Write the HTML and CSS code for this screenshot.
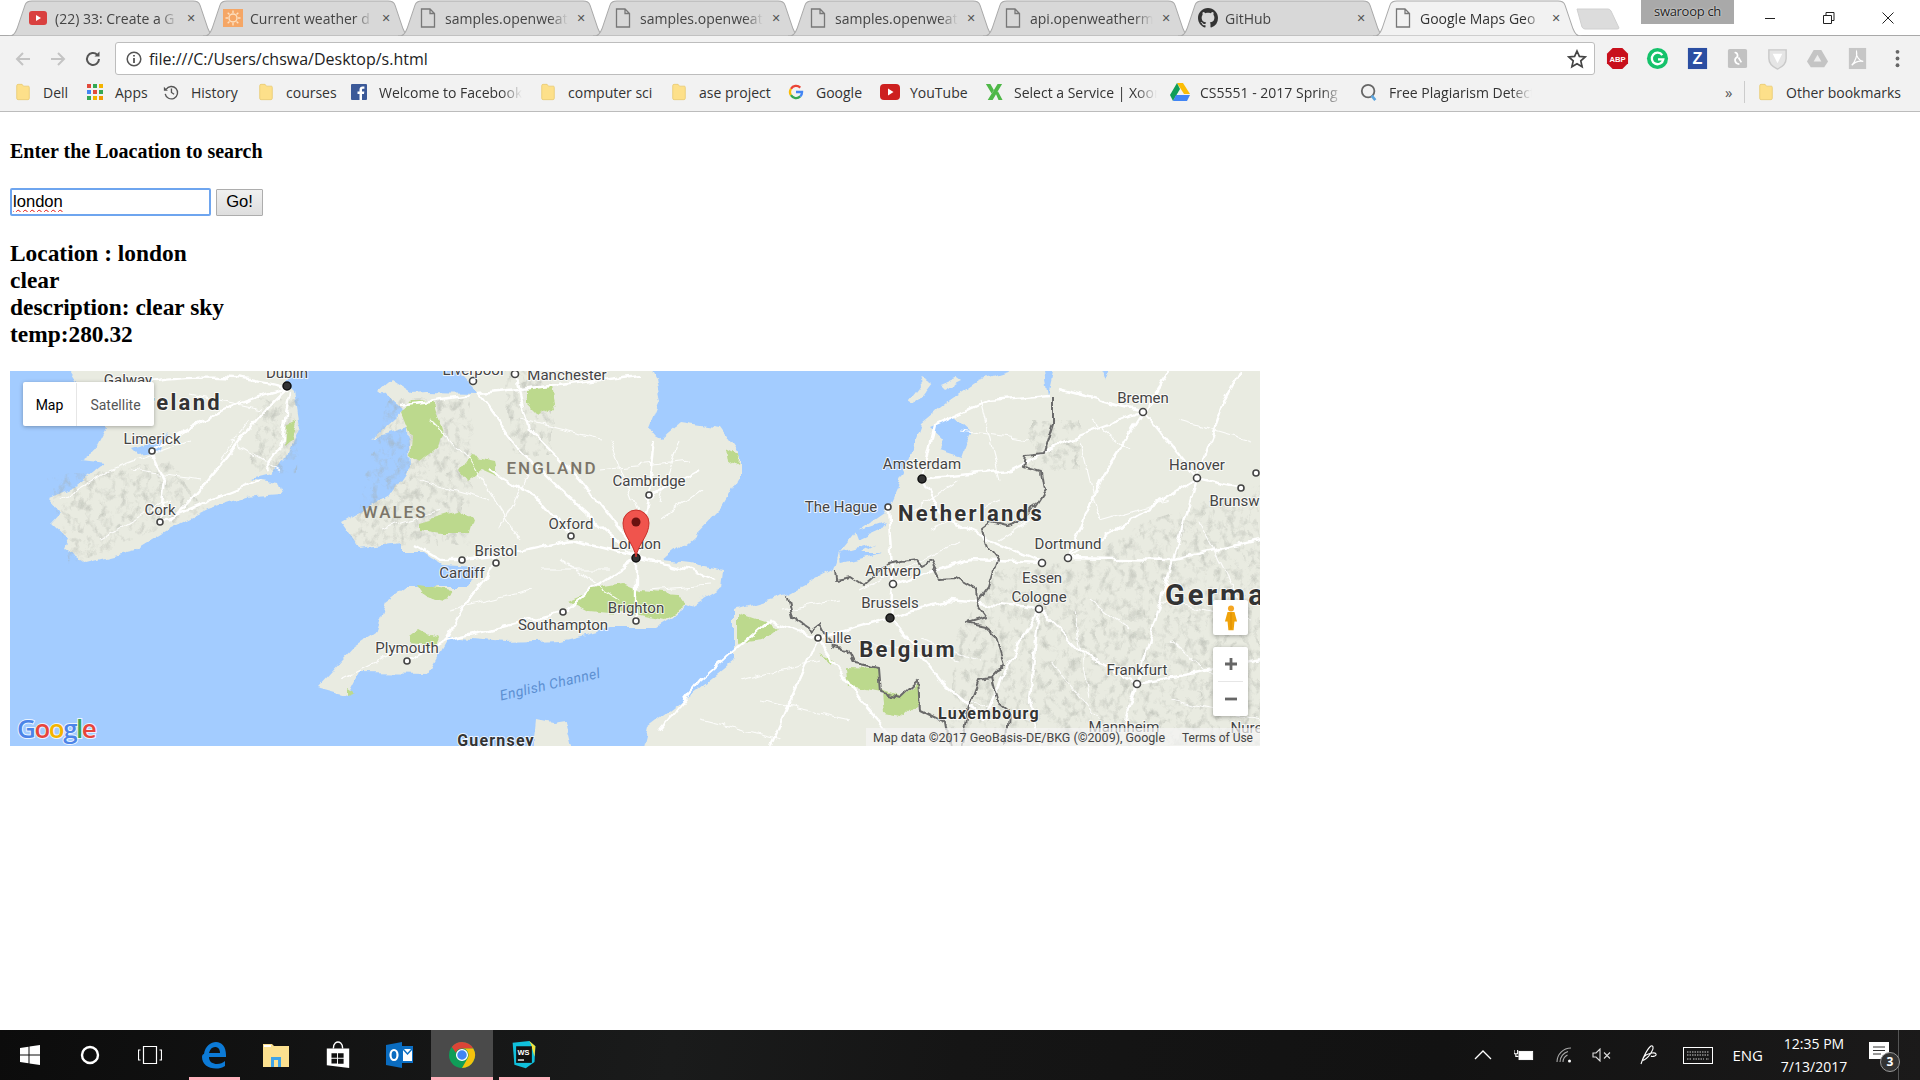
FILE: index.html
```html
<!DOCTYPE html>
<html lang="en">
<head>
<meta charset="utf-8">
<title>Google Maps Geocoding</title>
<link rel="stylesheet" href="styles.css">
</head>
<body>
<svg class="defs" width="0" height="0" aria-hidden="true">
  <symbol id="tab-shape" viewBox="0 0 209 35" preserveAspectRatio="none">
    <path d="M0 35 C5 35 7 33 9 28 L17 5 C18 2 20 1 24 1 L185 1 C189 1 191 2 192 5 L200 28 C202 33 204 35 209 35 Z"/>
  </symbol>
  <symbol id="page" viewBox="0 0 16 20">
    <path d="M1.5 1 H10 L14.5 5.5 V19 H1.5 Z M10 1 V5.5 H14.5" fill="none" stroke="#777" stroke-width="1.3"/>
  </symbol>
  <symbol id="folder" viewBox="0 0 16 20">
    <path d="M1 3 Q1 1.5 2.500 1.500 H7 L8.500 3.500 H14 Q15 3.500 15 5 V17 Q15 18.500 13.500 18.500 H2.500 Q1 18.500 1 17 Z" fill="#fde08a" stroke="#e8c76a" stroke-width=".8"/>
  </symbol>
</svg>

<header class="chrome">
  <div class="tabstrip">
    <div class="tab">
      <svg class="tab-bg"><use href="#tab-shape"/></svg>
      <svg class="fav" viewBox="0 0 20 20"><rect x="1" y="3" width="18" height="14" rx="3" fill="#d9403f"/><path d="M8 7 L13 10 L8 13 Z" fill="#fff"/></svg>
      <span class="tab-title">(22) 33: Create a G</span><span class="tab-x">✕</span>
    </div>
    <div class="tab">
      <svg class="tab-bg"><use href="#tab-shape"/></svg>
      <svg class="fav" viewBox="0 0 20 20"><rect x="0" y="1" width="20" height="18" fill="#f5a665"/><circle cx="10" cy="10" r="4" fill="none" stroke="#fde0c0" stroke-width="1.400"/><path d="M10 2.500V5M10 15v2.500M2.500 10H5M15 10h2.500M4.700 4.700l1.800 1.800M13.500 13.500l1.800 1.800M4.700 15.300l1.800-1.800M13.500 6.500l1.800-1.800" stroke="#fde0c0" stroke-width="1.400"/></svg>
      <span class="tab-title">Current weather d</span><span class="tab-x">✕</span>
    </div>
    <div class="tab">
      <svg class="tab-bg"><use href="#tab-shape"/></svg>
      <svg class="fav"><use href="#page"/></svg>
      <span class="tab-title">samples.openweat</span><span class="tab-x">✕</span>
    </div>
    <div class="tab">
      <svg class="tab-bg"><use href="#tab-shape"/></svg>
      <svg class="fav"><use href="#page"/></svg>
      <span class="tab-title">samples.openweat</span><span class="tab-x">✕</span>
    </div>
    <div class="tab">
      <svg class="tab-bg"><use href="#tab-shape"/></svg>
      <svg class="fav"><use href="#page"/></svg>
      <span class="tab-title">samples.openweat</span><span class="tab-x">✕</span>
    </div>
    <div class="tab">
      <svg class="tab-bg"><use href="#tab-shape"/></svg>
      <svg class="fav"><use href="#page"/></svg>
      <span class="tab-title">api.openweatherm</span><span class="tab-x">✕</span>
    </div>
    <div class="tab">
      <svg class="tab-bg"><use href="#tab-shape"/></svg>
      <svg class="fav" viewBox="0 0 16 16"><path fill="#333" d="M8 0C3.58 0 0 3.58 0 8c0 3.54 2.29 6.53 5.47 7.59.4.07.55-.17.55-.38 0-.19-.01-.82-.01-1.49-2.01.37-2.53-.49-2.69-.94-.09-.23-.48-.94-.82-1.13-.28-.15-.68-.52-.01-.53.63-.01 1.08.58 1.23.82.72 1.21 1.87.87 2.33.66.07-.52.28-.87.51-1.07-1.78-.2-3.64-.89-3.64-3.95 0-.87.31-1.59.82-2.15-.08-.2-.36-1.02.08-2.12 0 0 .67-.21 2.2.82.64-.18 1.32-.27 2-.27.68 0 1.36.09 2 .27 1.53-1.04 2.2-.82 2.2-.82.44 1.1.16 1.92.08 2.12.51.56.82 1.27.82 2.15 0 3.07-1.87 3.75-3.65 3.95.29.25.54.73.54 1.48 0 1.07-.01 1.93-.01 2.2 0 .21.15.46.55.38A8.013 8.013 0 0016 8c0-4.42-3.58-8-8-8z"/></svg>
      <span class="tab-title">GitHub</span><span class="tab-x">✕</span>
    </div>
    <div class="tab tab-active">
      <svg class="tab-bg"><use href="#tab-shape"/></svg>
      <svg class="fav"><use href="#page"/></svg>
      <span class="tab-title">Google Maps Geo</span><span class="tab-x">✕</span>
    </div>
    <svg class="newtab" viewBox="0 0 44 22"><path d="M1 1 H32 Q34 1 35 3 L43 20 Q43 21 41 21 H9 Q7 21 6 19 Z"/></svg>
    <div class="window-controls">
      <div class="user-chip">swaroop ch</div>
      <div class="wc-btns">
        <svg class="wc" viewBox="0 0 12 12"><path d="M1 6.500H11" stroke="#222" fill="none"/></svg>
        <svg class="wc" viewBox="0 0 12 12"><path d="M.5 3.500H8.500V11.500H.5ZM3 3.500V.5H11V8.500H8.500" stroke="#222" fill="none"/></svg>
        <svg class="wc" viewBox="0 0 12 12"><path d="M.5.5L11.500 11.500M11.500.5L.5 11.500" stroke="#222" fill="none"/></svg>
      </div>
    </div>
  </div>

  <div class="toolbar">
    <svg class="nav nav-off" viewBox="0 0 18 18"><path d="M16 9H3M9 3L3 9l6 6" fill="none" stroke-width="2"/></svg>
    <svg class="nav nav-off" viewBox="0 0 18 18"><path d="M2 9h13M9 3l6 6-6 6" fill="none" stroke-width="2"/></svg>
    <svg class="nav nav-on" viewBox="0 0 18 18"><path d="M15 9a6 6 0 1 1-1.800-4.300" fill="none" stroke-width="2"/><path d="M15.500 1.500V6.500H10.500Z" fill="#555" stroke="none"/></svg>
    <div class="omnibox">
      <svg class="info" viewBox="0 0 16 16"><circle cx="8" cy="8" r="6.800" fill="none" stroke="#555" stroke-width="1.500"/><path d="M8 7V12M8 4V5.600" stroke="#555" stroke-width="1.800"/></svg>
      <span class="url">file:///C:/Users/chswa/Desktop/s.html</span>
      <svg class="star" viewBox="0 0 20 20"><path d="M10 2l2.400 5.400 5.800.6-4.400 3.900 1.300 5.800-5.100-3-5.100 3 1.300-5.800L1.800 8l5.800-.6Z" fill="none" stroke="#444" stroke-width="1.700"/></svg>
    </div>
    <div class="extensions">
      <svg class="ext" viewBox="0 0 24 24"><path d="M7 1H17L23 7V17L17 23H7L1 17V7Z" fill="#c8101c"/><text x="12" y="15.500" class="ext-abp">ABP</text></svg>
      <svg class="ext" viewBox="0 0 24 24"><circle cx="12" cy="12" r="11" fill="#15c26b"/><path d="M17 8.500A6 6 0 1 0 18 13H12.500" fill="none" stroke="#fff" stroke-width="2.400"/></svg>
      <svg class="ext" viewBox="0 0 24 24"><rect x="2" y="1" width="20" height="22" fill="#2b4ea2"/><text x="12" y="18" class="ext-z">Z</text></svg>
      <svg class="ext" viewBox="0 0 24 24"><rect x="2" y="2" width="20" height="20" rx="2" fill="#c2c2c2"/><path d="M9 6c3-1 4 4 2 5s-3 6 3 7M13 11l3 5" fill="none" stroke="#fff" stroke-width="1.800"/></svg>
      <svg class="ext" viewBox="0 0 24 24"><path d="M3 3H21V12Q21 19 12 23Q3 19 3 12Z" fill="#e5e5e5" stroke="#c9c9c9" stroke-width="1.500"/><path d="M7 7H17L12 17Z" fill="#fff"/></svg>
      <svg class="ext" viewBox="0 0 24 24"><path d="M8 3H16L23 15L19 21H5L1 15Z" fill="#c4c4c4"/><path d="M12 8L16 15H8Z" fill="#eee"/></svg>
      <svg class="ext" viewBox="0 0 24 24"><rect x="3" y="1" width="18" height="22" fill="#c6c6c6"/><path d="M6 19C10 15 12 8 11 5C10 9 14 15 18 15C13 14 9 16 6 19Z" fill="none" stroke="#fff" stroke-width="1.300"/></svg>
      <svg class="ext" viewBox="0 0 24 24"><circle cx="12" cy="5" r="2" fill="#666"/><circle cx="12" cy="12" r="2" fill="#666"/><circle cx="12" cy="19" r="2" fill="#666"/></svg>
    </div>
  </div>

  <nav class="bookmarks">
    <a class="bm"><svg class="bm-ico"><use href="#folder"/></svg><span class="bm-text">Dell</span></a>
    <a class="bm"><svg class="bm-ico" viewBox="0 0 16 16"><g><rect x="0" y="0" width="4" height="4" fill="#e24a3b"/><rect x="6" y="0" width="4" height="4" fill="#34a853"/><rect x="12" y="0" width="4" height="4" fill="#f4b400"/><rect x="0" y="6" width="4" height="4" fill="#4285f4"/><rect x="6" y="6" width="4" height="4" fill="#e24a3b"/><rect x="12" y="6" width="4" height="4" fill="#34a853"/><rect x="0" y="12" width="4" height="4" fill="#34a853"/><rect x="6" y="12" width="4" height="4" fill="#f4b400"/><rect x="12" y="12" width="4" height="4" fill="#f29900"/></g></svg><span class="bm-text">Apps</span></a>
    <a class="bm"><svg class="bm-ico" viewBox="0 0 18 18"><path d="M3.500 6A7 7 0 1 1 2.500 11" fill="none" stroke="#555" stroke-width="1.500"/><path d="M1 3V7.500H5.500Z" fill="#555"/><path d="M9.500 5V9.500L12.500 11.500" fill="none" stroke="#555" stroke-width="1.500"/></svg><span class="bm-text">History</span></a>
    <a class="bm"><svg class="bm-ico"><use href="#folder"/></svg><span class="bm-text">courses</span></a>
    <a class="bm"><svg class="bm-ico" viewBox="0 0 16 16"><rect width="16" height="16" rx="1" fill="#3b5998"/><path d="M11 16V10H13L13.300 7.500H11V6C11 5.200 11.300 4.800 12.200 4.800H13.400V2.600C12.800 2.500 12.200 2.500 11.600 2.500C9.800 2.500 8.500 3.600 8.500 5.700V7.500H6.500V10H8.500V16Z" fill="#fff"/></svg><span class="bm-text bm-fade">Welcome to Facebook</span></a>
    <a class="bm"><svg class="bm-ico"><use href="#folder"/></svg><span class="bm-text">computer sci</span></a>
    <a class="bm"><svg class="bm-ico"><use href="#folder"/></svg><span class="bm-text">ase project</span></a>
    <a class="bm"><svg class="bm-ico" viewBox="0 0 18 18"><path d="M3.300 5.400A6.800 6.800 0 0 1 13.800 4" fill="none" stroke="#ea4335" stroke-width="2.600"/><path d="M3.300 5.400A6.800 6.800 0 0 0 3.300 12.600" fill="none" stroke="#fbbc05" stroke-width="2.600"/><path d="M3.300 12.600A6.800 6.800 0 0 0 13.800 14" fill="none" stroke="#34a853" stroke-width="2.600"/><path d="M13.800 14A6.800 6.800 0 0 0 15.800 9H9" fill="none" stroke="#4285f4" stroke-width="2.600"/></svg><span class="bm-text">Google</span></a>
    <a class="bm"><svg class="bm-ico bm-ico-wide" viewBox="0 0 20 16"><rect width="20" height="16" rx="4" fill="#cd201f"/><path d="M8 4.500L13.500 8L8 11.500Z" fill="#fff"/></svg><span class="bm-text">YouTube</span></a>
    <a class="bm"><svg class="bm-ico bm-ico-wide" viewBox="0 0 20 20"><path d="M1 1H6L10 8L7.500 12L1 1ZM19 1H14L3 19H8.500ZM12 12L15 19H19.500L14.500 9.500Z" fill="#4fb848"/></svg><span class="bm-text bm-fade">Select a Service | Xoom</span></a>
    <a class="bm"><svg class="bm-ico bm-ico-wide" viewBox="0 0 20 18"><path d="M7 0H13L20 11H14Z" fill="#fbbc05"/><path d="M7 0L0 12L3 18L10 6Z" fill="#0f9d58"/><path d="M6 12H20L17 18H3Z" fill="#4285f4"/></svg><span class="bm-text bm-fade">CS5551 - 2017 Spring</span></a>
    <a class="bm"><svg class="bm-ico bm-ico-wide" viewBox="0 0 20 20"><circle cx="9" cy="9" r="7" fill="none" stroke="#666" stroke-width="2"/><path d="M13 14L17 19" stroke="#5ba4dd" stroke-width="3"/></svg><span class="bm-text bm-fade">Free Plagiarism Detector</span></a>
    <span class="bm-more">»</span>
    <span class="bm-sep"></span>
    <a class="bm bm-other"><svg class="bm-ico"><use href="#folder"/></svg><span class="bm-text">Other bookmarks</span></a>
  </nav>
</header>

<main class="page">
  <h4 class="prompt">Enter the Loacation to search</h4>
  <form class="search">
    <input class="search-input" type="text" value="london">
    <button class="search-btn" type="button">Go!</button>
  </form>
  <h3 class="result">Location : london<br>clear<br>description: clear sky<br>temp:280.32</h3>

  <div class="map">
    <svg class="map-canvas" viewBox="10 371 1250 375" xmlns="http://www.w3.org/2000/svg">
      <defs>
        <filter id="rough" x="-3%" y="-5%" width="106%" height="110%">
          <feTurbulence type="fractalNoise" baseFrequency=".06" numOctaves="3" seed="11" result="n"/>
          <feDisplacementMap in="SourceGraphic" in2="n" scale="9" xChannelSelector="R" yChannelSelector="G" result="d"/>
          <feGaussianBlur in="d" stdDeviation=".55"/>
        </filter>
        <filter id="hills" x="0" y="0" width="100%" height="100%">
          <feTurbulence type="fractalNoise" baseFrequency=".14 .1" numOctaves="4" seed="7"/>
          <feColorMatrix values="0 0 0 0 .38  0 0 0 0 .4  0 0 0 0 .36  2.600 0 0 0 -1.250"/>
        </filter>
        <clipPath id="hilly">
          <path d="M48 478L170 462L205 510L70 565Z"/>
          <path d="M258 398L300 398L296 470L250 474Z"/>
          <path d="M388 398L472 398L470 545L348 545Z"/>
          <path d="M505 371L552 371L552 455L512 455Z"/>
          <path d="M1000 570L1090 560L1150 520L1280 480L1280 760L950 760L955 640Z"/>
          <path d="M1030 420L1080 420L1080 470L1030 470Z"/>
        </clipPath>
      </defs>
      <rect class="water" x="10" y="371" width="1250" height="375"/>
      <g filter="url(#rough)">
        <g class="land">
          <path d="M64 360L106 427L94 450L80 459L106 462L78 485L48 498L61 512L51 523L69 540L65 549L86 562L135 550L171 528L208 510L245 498L282 495L278 483L249 478L269 473L286 460L300 427L294 390L286 382L300 360Z"/>
          <path d="M469 360L461 375L478 393L424 392L412 393L392 380L380 390L404 410L373 438L408 427L410 467L392 493L341 522L359 548L402 543L402 553L424 553L441 565L478 567L469 587L408 587L386 603L376 633L355 647L318 687L347 695L359 672L429 673L449 637L506 642L563 640L612 627L656 627L722 587L724 570L689 563L664 560L693 537L722 507L740 477L740 453L722 428L681 422L662 438L648 430L660 400L656 380L646 360Z"/>
          <path d="M640 760L648 727L693 693L734 660L734 610L787 595L834 570L840 553L856 533L885 513L905 470L922 423L950 400L979 380L1042 360L1280 360L1280 760Z"/>
          <path d="M533 760L537 719L552 722L565 720L575 760Z"/>
          <path d="M908 400L925 378L931 382L914 404Z"/>
          <path d="M940 386L958 378L962 381L944 390Z"/>
        </g>
        <g class="inland-water">
          <path d="M930 427L954 417L971 432L962 457L940 450L944 440Z"/>
          <path d="M840 553L875 543L860 552L882 552L842 562Z"/>
          <path d="M855 532L886 522L880 530L858 540Z"/>
          <path d="M1042 360L1048 395L1056 360Z"/>
          <path d="M1095 360L1110 360L1105 382Z"/>
          <path d="M131 448L160 440L168 432L160 452L138 455Z"/>
        </g>
        <g clip-path="url(#hilly)">
          <rect x="10" y="371" width="1250" height="375" filter="url(#hills)" class="hillshade"/>
        </g>
        <g class="woods">
          <path d="M412 400L433 400L443 433L439 447L420 462L410 457L412 437L402 412Z"/>
          <path d="M527 390L551 387L555 407L539 415L527 403Z"/>
          <path d="M471 455L494 460L498 477L482 470L469 480L461 470Z"/>
          <path d="M420 522L461 510L473 520L469 533L441 533L420 530Z"/>
          <path d="M569 600L600 587L624 583L640 590L677 593L687 607L664 620L640 615L588 610Z"/>
          <path d="M416 585L453 590L445 602L424 597Z"/>
          <path d="M408 637L420 628L437 637L433 647L408 645Z"/>
          <path d="M347 687L355 692L347 695Z"/>
          <path d="M846 667L879 668L881 690L901 697L918 683L920 703L905 717L885 713L883 693L848 687Z"/>
          <path d="M738 613L779 627L762 640L738 643Z"/>
          <path d="M820 653L836 660L832 663Z"/>
          <path d="M726 448L740 455L738 467L728 460Z"/>
          <path d="M286 425L296 420L292 440L284 445Z"/>
        </g>
        <g class="roads">
          <path d="M287 388C240 400 200 420 152 451"/>
          <path d="M287 388C250 420 215 480 170 520"/>
          <path d="M287 388C240 375 190 372 128 385"/>
          <path d="M290 390L280 450L265 470"/>
          <path d="M160 522L165 480L152 451"/>
          <path d="M160 522L210 500L260 480"/>
          <path d="M478 393L520 450L560 490L636 558"/>
          <path d="M515 374L530 430L580 480L636 550"/>
          <path d="M462 560L500 555L571 540L636 556"/>
          <path d="M496 563L465 605L445 640L407 661"/>
          <path d="M415 545L440 560L462 560"/>
          <path d="M636 558L590 590L563 612"/>
          <path d="M636 558L636 621"/>
          <path d="M636 558L690 570L715 580"/>
          <path d="M636 558L649 495L655 440"/>
          <path d="M571 536L540 500L490 470"/>
          <path d="M645 500L700 470"/>
          <path d="M400 405L470 395"/>
          <path d="M563 612L490 630L445 640"/>
          <path d="M478 393L560 385L640 375"/>
          <path d="M922 479L945 520L1042 563"/>
          <path d="M888 507L893 584"/>
          <path d="M922 479L935 425L990 400L1050 395"/>
          <path d="M890 618L893 584"/>
          <path d="M890 618L818 638L770 620"/>
          <path d="M890 618L950 600L1039 609"/>
          <path d="M893 584L970 560L1042 563"/>
          <path d="M818 638L790 700L770 746"/>
          <path d="M890 618L940 680L985 720"/>
          <path d="M1039 609L1080 650L1137 684"/>
          <path d="M1068 558L1130 520L1197 478"/>
          <path d="M1143 412L1197 478"/>
          <path d="M1143 412L1100 480L1068 558"/>
          <path d="M1197 478L1241 488"/>
          <path d="M1137 684L1124 727"/>
          <path d="M1137 684L1260 660"/>
          <path d="M1068 558L1170 560L1260 540"/>
          <path d="M1143 412L1170 371"/>
          <path d="M1143 412L1060 390"/>
          <path d="M1197 478L1225 400L1240 371"/>
          <path d="M1039 609L1000 680L985 720"/>
          <path d="M1137 684L1170 570L1197 478"/>
          <path d="M770 620L700 680L660 730"/>
          <path d="M922 479L1010 470L1068 440L1143 412"/>
          <path d="M1039 609L1030 700L1040 746"/>
          <path d="M818 638L860 700L900 746"/>
        </g>
        <g class="roads-thin">
          <path d="M60 500L110 470L190 440M100 540L170 500M220 460L250 420M190 395L260 410M130 470L200 480M230 440L280 470"/>
          <path d="M430 420L470 460L520 540M380 530L440 510M420 480L490 500M520 420L600 440M600 470L690 460M660 520L700 490M560 560L620 600M450 610L530 590M340 680L400 650M530 470L500 530M610 440L640 520M680 440L660 500M540 570L610 570M650 590L710 585"/>
          <path d="M930 530L1000 500M960 430L1030 440M860 640L960 660M760 700L850 720M1080 440L1100 520M1180 420L1250 440M1090 600L1130 630M1160 600L1250 620M1170 700L1260 720M1050 660L1100 720M1200 520L1240 600M780 610L840 600M980 400L1000 480M1000 540L1030 520M900 520L960 480M860 590L960 540M740 680L820 660M700 720L780 740M920 640L980 660M1090 420L1130 450M1100 520L1170 500M1170 640L1230 690M1075 610L1090 700M960 700L1030 720"/>
        </g>
        <g class="borders">
          <path d="M1053 397L1053 423L1044 453L1026 455L1024 467L1042 472L1045 490L1032 510L1022 522L1007 527L991 523L982 530L987 547L997 560L989 587L977 603L987 617L967 623L985 627L997 638L1005 663L991 678L979 680L969 707L960 746"/>
          <path d="M991 678L997 700L1009 710L1007 746"/>
          <path d="M835 570L836 580L852 577L864 585L889 563L901 560L916 558L922 565L931 560L940 578L954 577L976 590L977 603"/>
          <path d="M787 596L792 617L811 630L820 623L832 647L848 650L854 663L879 668L881 693L899 698L918 680L920 710L946 723L950 746"/>
        </g>
      </g>
      <g class="dots">
        <circle cx="473" cy="381" r="3.500"/><circle cx="515" cy="374" r="3.500"/><circle cx="152" cy="451" r="3"/><circle cx="160" cy="522" r="3"/><circle cx="649" cy="495" r="3"/><circle cx="571" cy="536" r="3"/><circle cx="496" cy="563" r="3"/><circle cx="462" cy="560" r="3"/><circle cx="563" cy="612" r="3"/><circle cx="636" cy="621" r="3"/><circle cx="407" cy="661" r="3"/><circle cx="1143" cy="412" r="3.500"/><circle cx="1197" cy="478" r="3.500"/><circle cx="1256" cy="473" r="3"/><circle cx="1241" cy="488" r="3"/><circle cx="888" cy="507" r="3"/><circle cx="1068" cy="558" r="3.500"/><circle cx="1042" cy="563" r="3.500"/><circle cx="1039" cy="609" r="3.500"/><circle cx="893" cy="584" r="3.500"/><circle cx="818" cy="638" r="3"/><circle cx="1137" cy="684" r="3.500"/>
      </g>
      <g class="capitals">
        <circle cx="287" cy="386" r="4"/><circle cx="636" cy="558" r="4"/><circle cx="922" cy="479" r="4"/><circle cx="890" cy="618" r="4"/>
      </g>
      <g class="labels">
        <text x="128" y="385">Galway</text><text x="287" y="378">Dublin</text><text x="473" y="375">Liverpool</text><text x="567" y="380">Manchester</text>
        <text x="152" y="444">Limerick</text><text x="160" y="515">Cork</text><text x="649" y="486">Cambridge</text><text x="571" y="529">Oxford</text><text x="636" y="549">London</text><text x="496" y="556">Bristol</text><text x="462" y="578">Cardiff</text><text x="563" y="630">Southampton</text><text x="636" y="613">Brighton</text><text x="407" y="653">Plymouth</text>
        <text x="1143" y="403">Bremen</text><text x="922" y="469">Amsterdam</text><text x="1197" y="470">Hanover</text><text x="1244" y="506">Brunswick</text><text x="841" y="512">The Hague</text><text x="1068" y="549">Dortmund</text><text x="1042" y="583">Essen</text><text x="1039" y="602">Cologne</text><text x="893" y="576">Antwerp</text><text x="890" y="608">Brussels</text><text x="838" y="643">Lille</text><text x="1137" y="675">Frankfurt</text><text x="1124" y="732">Mannheim</text><text x="1268" y="733">Nuremberg</text>
      </g>
      <g class="labels-region">
        <text x="552" y="474">ENGLAND</text><text x="395" y="518">WALES</text>
      </g>
      <g class="labels-country">
        <text class="c-ireland" x="222" y="410">Ireland</text>
        <text x="971" y="521">Netherlands</text><text x="908" y="657">Belgium</text><text class="c-germany" x="1165" y="605">Germany</text>
      </g>
      <g class="labels-minor">
        <text x="989" y="719">Luxembourg</text><text x="496" y="746">Guernsey</text>
      </g>
      <text class="label-sea" transform="translate(551 689) rotate(-13)">English Channel</text>
      <path class="pin" d="M636 557C634 544 623 536 623 523A13 13 0 0 1 649 523C649 536 638 544 636 557Z"/>
      <circle class="pin-dot" cx="636" cy="522" r="4.500"/>
    </svg>

    <div class="map-type">
      <div class="map-type-btn map-type-on">Map</div>
      <div class="map-type-btn">Satellite</div>
    </div>
    <div class="google-logo"><span class="g-b">G</span><span class="g-r">o</span><span class="g-y">o</span><span class="g-b">g</span><span class="g-g">l</span><span class="g-r">e</span></div>
    <div class="attribution"><span>Map data ©2017 GeoBasis-DE/BKG (©2009), Google</span><span class="terms">Terms of Use</span></div>
    <div class="pegman">
      <svg viewBox="0 0 16 30" class="pegman-ico"><circle cx="8" cy="4" r="3.500" fill="#f5a623"/><path d="M4 8H12L15 19H12L11 29H5L4 19H1Z" fill="#f0a30a"/><path d="M8 9V28" stroke="#d98a00" stroke-width="1"/></svg>
    </div>
    <div class="zoom-ctl">
      <div class="zoom-btn">
        <svg class="zoom-ico" viewBox="0 0 14 14"><path d="M7 1V13M1 7H13" stroke="#666" stroke-width="2.800"/></svg>
      </div>
      <div class="zoom-sep"></div>
      <div class="zoom-btn">
        <svg class="zoom-ico" viewBox="0 0 14 14"><path d="M1 7H13" stroke="#666" stroke-width="2.800"/></svg>
      </div>
    </div>
  </div>
</main>

<footer class="taskbar">
  <div class="task-left">
    <div class="task-btn"><svg class="task-ico" viewBox="0 0 20 20"><path d="M0 3L8.500 1.800V9.500H0ZM9.500 1.600L20 0V9.500H9.500ZM0 10.500H8.500V18.200L0 17ZM9.500 10.500H20V20L9.500 18.400Z" fill="#fff"/></svg></div>
    <div class="task-btn"><svg class="task-ico" viewBox="0 0 20 20"><circle cx="10" cy="10" r="8" fill="none" stroke="#fff" stroke-width="2.400"/></svg></div>
    <div class="task-btn"><svg class="task-ico task-ico-wide" viewBox="0 0 24 20"><path d="M5.500 1.500H18.500V18.500H5.500ZM2.500 5H.5V15H2.500M21.500 5H23.500V15H21.500" fill="none" stroke="#fff" stroke-width="1.200"/></svg></div>
    <div class="task-app task-running"><svg class="task-ico-lg" viewBox="0 0 26 28"><path d="M3 13C4 5 10 1 15 1C21 1 25 6 25 14V16H8C8 21 12 23 16 23C19 23 22 22 24 20V25C21 27 18 27.500 15 27.500C7 27.500 1 23 1 16C1 14 2 13 3 13ZM8 12H19C19 8 17 6 14 6C11 6 9 8 8 12Z" fill="#0c7ad6"/></svg></div>
    <div class="task-app"><svg class="task-ico-lg" viewBox="0 0 28 26"><path d="M1 2H10L12 4H27V25H1Z" fill="#fbe08f"/><path d="M2 3H9V5H2Z" fill="#fff"/><path d="M9 25V15H19V25H16V18H12V25Z" fill="#3ea4e8"/></svg></div>
    <div class="task-app"><svg class="task-ico-lg" viewBox="0 0 26 30"><path d="M1 8H25V29L1 26Z" fill="#fff"/><path d="M8 8C8 2 12 1 13 1C14 1 18 2 18 8" fill="none" stroke="#fff" stroke-width="1.500"/><path d="M6 13H12V18H6ZM13 13H19V18H13ZM6 19H12V24H6ZM13 19H19V24.500H13Z" fill="#111"/></svg></div>
    <div class="task-app"><svg class="task-ico-lg" viewBox="0 0 28 28"><path d="M16 5H27V22H16Z" fill="#0c6fc4"/><path d="M17 8H26V20H17Z" fill="#fff"/><path d="M17 8L21.500 13L26 8" fill="none" stroke="#0c6fc4" stroke-width="1.500"/><path d="M0 4L16 1V27L0 24Z" fill="#0a6cc0"/><ellipse cx="8" cy="14" rx="3.500" ry="5" fill="none" stroke="#fff" stroke-width="2.200"/></svg></div>
    <div class="task-app task-active task-running">
      <svg class="task-ico-lg" viewBox="0 0 28 28"><circle cx="14" cy="14" r="13" fill="#0f9d58"/><path d="M14 1A13 13 0 0 1 25.300 7.500H14A6.500 6.500 0 0 0 7.900 11.700L3.800 6A13 13 0 0 1 14 1Z" fill="#db4437"/><path d="M25.300 7.500A13 13 0 0 1 14 27L19.600 17.300A6.500 6.500 0 0 0 19.600 10.700 6 6 0 0 0 14 7.500Z" fill="#f4c20d"/><circle cx="14" cy="14" r="5.400" fill="#4285f4" stroke="#fff" stroke-width="1.300"/></svg>
    </div>
    <div class="task-app task-running">
      <svg class="task-ico-lg" viewBox="0 0 28 32"><path d="M1 2L20 0L27 6L26 24L16 31L3 27Z" fill="#10c0dc"/><path d="M20 0L27 6L26 18L22 4Z" fill="#f5e23a"/><rect x="5" y="6" width="18" height="19" fill="#111"/><text x="6.500" y="16.500" class="ws-mark">WS</text><rect x="7" y="21" width="7" height="1.500" fill="#fff"/></svg>
    </div>
  </div>
  <div class="tray">
    <svg class="tray-ico tray-chevron" viewBox="0 0 18 10"><path d="M1 9L9 1L17 9" fill="none" stroke="#fff" stroke-width="1.300"/></svg>
    <svg class="tray-ico tray-battery" viewBox="0 0 22 14"><rect x="5.500" y="2.500" width="15" height="9" fill="#fff" stroke="#fff"/><path d="M0 1V5H4V1M2 5V8H5" fill="none" stroke="#fff" stroke-width="1.200"/></svg>
    <svg class="tray-ico tray-wifi" viewBox="0 0 16 16"><g fill="none" stroke="#aaa" stroke-width="1.100"><path d="M1 15A14 14 0 0 1 15 1"/><path d="M4 15A11 11 0 0 1 12 4.500"/><path d="M7 15A8 8 0 0 1 11.500 8"/></g><circle cx="13.500" cy="14" r="1.500" fill="#fff"/></svg>
    <svg class="tray-ico tray-vol" viewBox="0 0 20 14"><path d="M1 5H4L8 1V13L4 9H1Z" fill="none" stroke="#ddd" stroke-width="1.100"/><path d="M12 4.500L18 10.500M18 4.500L12 10.500" stroke="#ddd" stroke-width="1.100"/></svg>
    <svg class="tray-ico tray-pen" viewBox="0 0 18 20"><path d="M1 19C3 12 8 3 11 1C13 0 14 3 12 6C10 10 6 14 4 15C2 16 3 12 6 10C10 8 15 7 16 9C17 11 12 12 11 11" fill="none" stroke="#fff" stroke-width="1.100"/></svg>
    <svg class="tray-ico tray-kbd" viewBox="0 0 30 17"><rect x=".5" y=".5" width="29" height="16" fill="none" stroke="#fff"/><path d="M4 5H26M4 8H26M4 12H8M10 12H21M23 12H26" stroke="#ccc" stroke-dasharray="1.500 1"/></svg>
    <span class="tray-lang">ENG</span>
    <div class="clock"><span>12:35 PM</span><span>7/13/2017</span></div>
    <div class="notif">
      <svg class="notif-ico" viewBox="0 0 20 18"><path d="M0 0H20V17H0Z" fill="#fff"/><path d="M4 5H16M4 8.500H16M4 12H12" stroke="#333"/></svg>
      <span class="notif-badge">3</span>
    </div>
    <span class="show-desktop"></span>
  </div>
</footer>
</body>
</html>
```

FILE: styles.css
```css
* { box-sizing: border-box; }
html, body { margin: 0; height: 100%; }
body {
  background: #fff;
  font-family: "Liberation Serif", serif;
  color: #000;
  height: 1080px;
  overflow: hidden;
  display: flex;
  flex-direction: column;
}
.defs { position: absolute; }

/* browser chrome */
.chrome { font-family: "Open Sans", sans-serif; height: 112px; flex: none; }
.tabstrip { display: flex; height: 36px; padding-left: 8px; position: relative; background: linear-gradient(#fff 35px, #a9a9a9 35px); }
.tab {
  position: relative;
  width: 209px;
  height: 36px;
  margin-right: -14px;
  flex: none;
  display: flex;
  align-items: center;
  padding: 0 19px 0 20px;
  font-size: 14px;
  color: #444;
}
.tab-bg { position: absolute; left: 0; top: 0; width: 209px; height: 36px; fill: #d8d8d8; stroke: #a9a9a9; z-index: 0; }
.tab-active .tab-bg { fill: #f2f2f2; }
.tab-active { z-index: 2; color: #333; }
.fav { width: 20px; height: 20px; flex: none; position: relative; z-index: 1; margin-right: 7px; }
.tab-title {
  flex: 1;
  min-width: 0;
  white-space: nowrap;
  overflow: hidden;
  position: relative;
  z-index: 1;
  -webkit-mask-image: linear-gradient(to right, #000 85%, transparent);
  mask-image: linear-gradient(to right, #000 85%, transparent);
}
.tab-x { position: relative; z-index: 1; font-size: 11px; color: #555; width: 14px; text-align: center; flex: none; font-family: "DejaVu Sans", sans-serif; margin-left: 6px; }
.newtab { width: 44px; height: 22px; margin: 8px 0 0 8px; fill: #dcdcdc; stroke: #d0d0d0; flex: none; }
.window-controls { margin-left: auto; display: flex; align-items: flex-start; }
.user-chip { background: #a9a9a9; color: #222; font-size: 13px; height: 24px; width: 93px; text-align: center; line-height: 22px; margin-right: 30px; letter-spacing: -.3px; text-shadow: 0 0 2px #fff; }
.wc-btns { display: flex; gap: 47px; padding: 12px 26px 0 0; }
.wc { width: 12px; height: 12px; }

.toolbar { height: 39px; background: #f2f2f2; display: flex; align-items: center; padding: 6px 0 0 14px; position: relative; }
.nav { width: 18px; height: 18px; margin-right: 17px; flex: none; }
.nav-off { stroke: #c4c4c4; }
.nav-on { stroke: #555; margin-right: 13px; }
.omnibox {
  width: 1480px;
  height: 33px;
  background: #fff;
  border: 1px solid #bdbdbd;
  border-radius: 3px;
  display: flex;
  align-items: center;
  padding: 0 7px 0 10px;
  flex: none;
}
.info { width: 16px; height: 16px; flex: none; margin-right: 7px; }
.url { font-size: 16px; color: #222; flex: 1; }
.star { width: 20px; height: 20px; flex: none; }
.extensions { display: flex; gap: 17px; padding-left: 11px; }
.ext { width: 23px; height: 23px; flex: none; }
.ext-abp { font: bold 8px "Liberation Sans", sans-serif; fill: #fff; text-anchor: middle; }
.ext-z { font: bold 17px "Liberation Sans", sans-serif; fill: #fff; text-anchor: middle; }

.bookmarks {
  height: 37px;
  background: #f2f2f2;
  border-bottom: 1px solid #bcbcbc;
  display: grid;
  grid-template-columns: 72px 76px 95px 93px 189px 131px 117px 92px 104px 186px 189px 366px 19px 14px 1fr;
  padding: 0 0 2px 15px;
  align-items: center;
  font-size: 14px;
  color: #333;
}
.bm { display: flex; align-items: center; white-space: nowrap; min-width: 0; }
.bm-ico { width: 16px; height: 18px; flex: none; margin-right: 12px; }
.bm-ico-wide { width: 20px; height: 18px; margin-right: 10px; }
.bm-text { min-width: 0; }
.bm-fade {
  overflow: hidden;
  width: 143px;
  -webkit-mask-image: linear-gradient(to right, #000 85%, transparent);
  mask-image: linear-gradient(to right, #000 85%, transparent);
}
.bm-more { font-size: 15px; color: #555; }
.bm-sep { width: 1px; height: 22px; background: #ccc; }
.bm-other { white-space: nowrap; }

/* page */
.page { flex: 1; min-height: 0; padding: 0 10px; }
.prompt { font-size: 20px; line-height: 23px; margin: 28px 0 25px; font-weight: bold; }
.search { display: flex; gap: 5px; align-items: center; margin: 0; height: 28px; }
.search-input {
  width: 201px;
  height: 28px;
  border: 2px solid #6ea5ef;
  border-radius: 2px;
  padding: 0 1px;
  font: 16.6px "Liberation Sans", sans-serif;
  color: #000;
  text-decoration: underline wavy #e01010 1px;
  text-underline-offset: 2px;
  outline: none;
}
.search-btn {
  width: 47px;
  height: 27px;
  border: 1px solid #adadad;
  border-radius: 1px;
  background: linear-gradient(#f0f0f0, #dedede);
  font: 16.6px "Liberation Sans", sans-serif;
  color: #000;
  padding: 0;
}
.result { font-size: 23.4px; line-height: 27px; margin: 24px 0 23px; font-weight: bold; }

/* map */
.map { position: relative; width: 1250px; height: 375px; overflow: hidden; }
.map-canvas { position: absolute; inset: 0; width: 1250px; height: 375px; display: block; }
.water { fill: #a3ccff; }
.land { fill: #e9ebe1; }
.hillshade { opacity: .5; }
.woods { fill: #bcd98d; }
.inland-water { fill: #a3ccff; }
.roads { fill: none; stroke: #fff; stroke-width: 2.400; stroke-linejoin: round; }
.roads-thin { fill: none; stroke: #fff; stroke-width: 1.100; opacity: .9; }
.borders { fill: none; stroke: #6a6a6a; stroke-width: 2; stroke-linejoin: round; }
.dots circle { fill: #fff; stroke: #444; stroke-width: 1.600; }
.capitals circle { fill: #333; stroke: #111; stroke-width: 1.500; outline: none; }
.labels text, .labels-region text, .labels-country text, .labels-minor text {
  font-family: Roboto, sans-serif;
  text-anchor: middle;
  paint-order: stroke;
  stroke-linejoin: round;
}
.labels text { font-size: 15px; fill: #444; stroke: rgba(255,255,255,.8); stroke-width: 2px; }
.labels-region text { font-size: 17px; font-weight: 500; letter-spacing: 2px; fill: #7b7569; }
.labels-country text { font-size: 22px; font-weight: 700; letter-spacing: 2.300px; fill: #333; stroke: rgba(255,255,255,.8); stroke-width: 2px; }
.labels-minor text { font-size: 16px; font-weight: 700; letter-spacing: 1.200px; fill: #333; stroke: rgba(255,255,255,.8); stroke-width: 2px; }
.labels-country .c-ireland { text-anchor: end; }
.labels-country .c-germany { text-anchor: start; font-size: 29px; letter-spacing: 3px; }
.label-sea { font: italic 14px Roboto, sans-serif; fill: #5c8fd1; text-anchor: middle; letter-spacing: .4px; }
.pin { fill: #f0544d; stroke: #c9302a; stroke-width: 1; }
.pin-dot { fill: #6b1210; }

.map-type {
  position: absolute;
  left: 13px;
  top: 11px;
  width: 131px;
  height: 44px;
  display: flex;
  background: #fff;
  border-radius: 2px;
  box-shadow: 0 1px 4px rgba(0,0,0,.3);
  font: 14px Roboto, sans-serif;
  color: #565656;
  padding-top: 1px;
}
.map-type-btn { display: flex; align-items: center; justify-content: center; flex: 1; }
.map-type-on { flex: none; width: 54px; color: #000; border-right: 1px solid #e6e6e6; }
.google-logo {
  position: absolute;
  left: 7px;
  bottom: 1px;
  font: 600 26px "Open Sans", sans-serif;
  letter-spacing: -1.500px;
  paint-order: stroke;
  -webkit-text-stroke: 2px rgba(255,255,255,.8);
  line-height: 34px;
}
.g-b { color: #4c84e8; }
.g-r { color: #e8453c; }
.g-y { color: #f5b400; }
.g-g { color: #3aa757; }
.attribution {
  position: absolute;
  right: 0;
  bottom: 0;
  height: 18px;
  width: 394px;
  background: rgba(245,245,245,.7);
  font: 12.5px Roboto, sans-serif;
  color: #444;
  display: flex;
  justify-content: space-between;
  align-items: center;
  padding: 1px 7px 0 7px;
  white-space: nowrap;
}
.terms { font-size: 12px; }
.pegman {
  position: absolute;
  left: 1203px;
  top: 229px;
  width: 35px;
  height: 35px;
  background: #fff;
  border-radius: 2px;
  box-shadow: 0 1px 4px rgba(0,0,0,.3);
  display: flex;
  align-items: center;
  justify-content: center;
}
.pegman-ico { width: 16px; height: 26px; }
.zoom-ctl {
  position: absolute;
  left: 1203px;
  top: 276px;
  width: 35px;
  height: 69px;
  background: #fff;
  border-radius: 2px;
  box-shadow: 0 1px 4px rgba(0,0,0,.3);
  display: flex;
  flex-direction: column;
}
.zoom-btn { flex: 1; display: flex; align-items: center; justify-content: center; }
.zoom-ico { width: 14px; height: 14px; }
.zoom-sep { height: 1px; background: #e6e6e6; margin: 0 5px; }

/* taskbar */
.taskbar {
  height: 50px;
  flex: none;
  background: linear-gradient(100deg, #0c0c0c, #1a1b1b 35%, #151515 50%, #121212 75%, #1b1a1a);
  display: flex;
  justify-content: space-between;
  color: #fff;
  font-family: "Open Sans", sans-serif;
}
.task-left { display: flex; }
.task-btn { width: 60px; display: flex; align-items: center; justify-content: center; }
.task-app { width: 62px; display: flex; align-items: center; justify-content: center; position: relative; }
.task-btn:nth-child(3) { margin-right: 3px; }
.task-running::after { content: ""; position: absolute; left: 6px; right: 5px; bottom: 0; height: 3px; background: #ffb0bb; }
.task-active { background: #4a4a4a; }
.task-active::after { left: 0; right: 0; }
.task-ico { width: 20px; height: 20px; }
.task-ico-wide { width: 24px; }
.task-ico-lg { width: 28px; height: 28px; }
.ws-mark { font: bold 8.500px "Liberation Sans", sans-serif; fill: #fff; }

.tray { display: flex; align-items: center; }
.tray-ico { flex: none; }
.tray-chevron { width: 18px; height: 10px; margin-right: 22px; }
.tray-battery { width: 20px; height: 13px; margin-right: 22px; }
.tray-wifi { width: 16px; height: 16px; margin-right: 20px; }
.tray-vol { width: 20px; height: 14px; margin-right: 28px; }
.tray-pen { width: 18px; height: 20px; margin-right: 25px; }
.tray-kbd { width: 30px; height: 17px; margin-right: 19px; }
.tray-lang { font-size: 15px; margin-right: 18px; }
.clock { display: flex; flex-direction: column; align-items: center; width: 66px; font-size: 14px; line-height: 23px; margin-right: 13px; }
.notif { position: relative; width: 38px; height: 36px; }
.notif-ico { width: 20px; height: 18px; position: absolute; left: 9px; top: 5px; }
.notif-badge {
  position: absolute;
  left: 20px;
  top: 15px;
  width: 20px;
  height: 20px;
  border-radius: 50%;
  background: #333;
  border: 1px solid #999;
  font-size: 12px;
  font-weight: 700;
  text-align: center;
  line-height: 18px;
}
.show-desktop { width: 1px; height: 50px; background: #555; margin: 0 21px 0 0; }
```
